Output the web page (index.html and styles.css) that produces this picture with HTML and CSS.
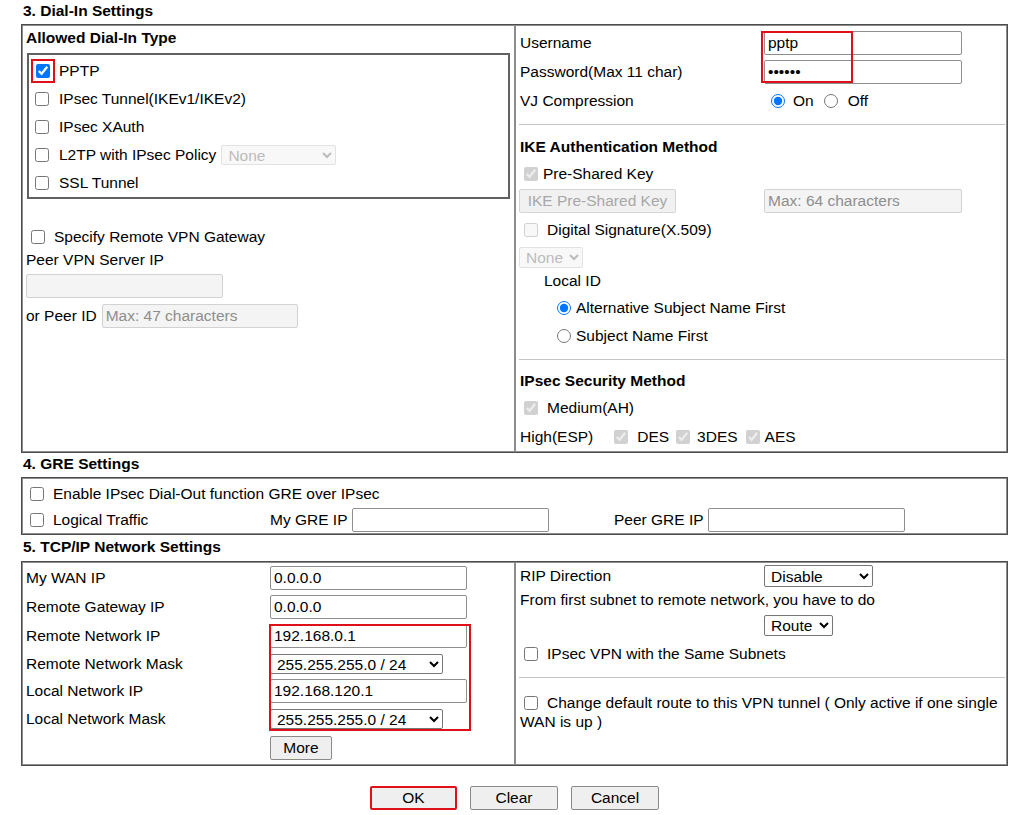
FILE: index.html
```html
<!DOCTYPE html>
<html lang="en">
<head>
<meta charset="utf-8">
<title>Dial-In Settings</title>
<link rel="stylesheet" href="styles.css">
</head>
<body>
<div class="page">
  <div class="sec-title">3. Dial-In Settings</div>
  <div class="box box3 two">
    <div class="cell cell-left">
      <div class="bold-row pl3 h24">Allowed Dial-In Type</div>
      <div class="typebox">
        <div class="trow"><span class="redcb"><input type="checkbox" class="cb" checked></span><span class="tlabel">PPTP</span></div>
        <div class="trow"><input type="checkbox" class="cb tcb"><span>IPsec Tunnel(IKEv1/IKEv2)</span></div>
        <div class="trow"><input type="checkbox" class="cb tcb"><span>IPsec XAuth</span></div>
        <div class="trow"><input type="checkbox" class="cb tcb"><span>L2TP with IPsec Policy</span><select class="sel sel-l2tp" disabled><option>None</option></select></div>
        <div class="trow"><input type="checkbox" class="cb tcb"><span>SSL Tunnel</span></div>
      </div>
      <div class="row specify"><input type="checkbox" class="cb spec-cb"><span>Specify Remote VPN Gateway</span></div>
      <div class="row pl3 h20">Peer VPN Server IP</div>
      <div class="row pl3 h32"><input type="text" class="txt dis w197" disabled></div>
      <div class="row pl3 h28"><span>or Peer ID</span><input type="text" class="txt dis w196 peerid" placeholder="Max: 47 characters" disabled></div>
    </div>
    <div class="cell cell-right">
      <div class="red-user"></div>
      <div class="frow h29 mt2"><span>Username</span><input type="text" class="txt w198" value="pptp"></div>
      <div class="frow h29"><span>Password(Max 11 char)</span><input type="password" class="txt w198" value="123456"></div>
      <div class="frow h29"><span>VJ Compression</span><span class="radios"><input type="radio" name="vj" class="rd rd-on" checked><span>On</span><input type="radio" name="vj" class="rd rd-off"><span>Off</span></span></div>
      <div class="sep"></div>
      <div class="bold-row h26">IKE Authentication Method</div>
      <div class="row h28"><input type="checkbox" class="cb rcb rcb-near" checked disabled><span>Pre-Shared Key</span></div>
      <div class="frow h26"><button class="btn btn-ike" disabled>IKE Pre-Shared Key</button><input type="text" class="txt dis w198" placeholder="Max: 64 characters" disabled></div>
      <div class="row h32"><input type="checkbox" class="cb rcb" disabled><span>Digital Signature(X.509)</span></div>
      <div class="row h22"><select class="sel sel-none" disabled><option>None</option></select></div>
      <div class="row h26 pl24">Local ID</div>
      <div class="row h28 pl37"><input type="radio" name="lid" class="rd rd-lid" checked><span>Alternative Subject Name First</span></div>
      <div class="row h28 pl37"><input type="radio" name="lid" class="rd rd-lid"><span>Subject Name First</span></div>
      <div class="sep"></div>
      <div class="bold-row h24">IPsec Security Method</div>
      <div class="row h30"><input type="checkbox" class="cb rcb" checked disabled><span>Medium(AH)</span></div>
      <div class="row h27"><span>High(ESP)</span><input type="checkbox" class="cb esp1" checked disabled><span>DES</span><input type="checkbox" class="cb esp2" checked disabled><span>3DES</span><input type="checkbox" class="cb esp3" checked disabled><span>AES</span></div>
    </div>
  </div>

  <div class="sec-title">4. GRE Settings</div>
  <div class="box box4">
    <div class="cell cell-full">
      <div class="row h26"><input type="checkbox" class="cb gcb"><span>Enable IPsec Dial-Out function GRE over IPsec</span></div>
      <div class="row h26">
        <span class="gcheck"><input type="checkbox" class="cb gcb"><span>Logical Traffic</span></span>
        <span class="glabel-my">My GRE IP</span><input type="text" class="txt w197">
        <span class="glabel-peer">Peer GRE IP</span><input type="text" class="txt w197">
      </div>
    </div>
  </div>

  <div class="sec-title sec-title-5">5. TCP/IP Network Settings</div>
  <div class="box box5 two">
    <div class="cell cell-left">
      <div class="red-net"></div>
      <div class="lrow h29"><span>My WAN IP</span><input type="text" class="txt w197" value="0.0.0.0"></div>
      <div class="lrow h29"><span>Remote Gateway IP</span><input type="text" class="txt w197" value="0.0.0.0"></div>
      <div class="lrow h29"><span>Remote Network IP</span><input type="text" class="txt w197" value="192.168.0.1"></div>
      <div class="lrow h27"><span>Remote Network Mask</span><select class="sel sel-mask"><option>255.255.255.0 / 24</option></select></div>
      <div class="lrow h28"><span>Local Network IP</span><input type="text" class="txt w197" value="192.168.120.1"></div>
      <div class="lrow h28"><span>Local Network Mask</span><select class="sel sel-mask"><option>255.255.255.0 / 24</option></select></div>
      <div class="lrow h29"><span></span><button class="btn btn-more">More</button></div>
    </div>
    <div class="cell cell-right">
      <div class="frow h26"><span>RIP Direction</span><select class="sel sel-rip"><option>Disable</option></select></div>
      <div class="row h22">From first subnet to remote network, you have to do</div>
      <div class="frow h29"><span></span><select class="sel sel-route"><option>Route</option></select></div>
      <div class="row h28"><input type="checkbox" class="cb rcb"><span>IPsec VPN with the Same Subnets</span></div>
      <div class="sep"></div>
      <div class="cdr"><input type="checkbox" class="cb rcb cdr-cb">Change default route to this VPN tunnel ( Only active if one single WAN is up )</div>
    </div>
  </div>

  <div class="actions">
    <button class="btn btn-ok">OK</button>
    <button class="btn btn-act">Clear</button>
    <button class="btn btn-act">Cancel</button>
  </div>
</div>
</body>
</html>
```

FILE: styles.css
```css
* { box-sizing: border-box; }

body {
  margin: 0;
  font-family: "Liberation Sans", Arial, sans-serif;
  font-size: 15.5px;
  color: #000;
  background: #fff;
}

.page { width: 1024px; }

.sec-title {
  margin-left: 23px;
  height: 22px;
  line-height: 22px;
  margin-bottom: 2px;
  font-weight: bold;
}
.sec-title-5 { height: 24px; line-height: 24px; }

.box {
  margin-left: 21px;
  width: 987px;
  border: 1px solid #4d4d4d;
}
.two {
  display: grid;
  grid-template-columns: 493px 492px;
}
.box3 { height: 429px; }
.box4 { height: 58px; }
.box5 { height: 205px; }

.cell {
  position: relative;
  border: 1px solid #8c8c8c;
}
.cell-right { padding-left: 4px; }
.cell-full { padding-top: 2px; }
.box5 .cell-left { padding-left: 3px; }

.row {
  display: flex;
  align-items: center;
}
.bold-row {
  display: flex;
  align-items: center;
  font-weight: bold;
}
.frow {
  display: grid;
  grid-template-columns: 244px 1fr;
  align-items: center;
}
.lrow {
  display: grid;
  grid-template-columns: 244px 1fr;
  align-items: center;
}

.h20 { height: 20px; }
.h22 { height: 22px; }
.h24 { height: 24px; }
.h26 { height: 26px; }
.h27 { height: 27px; }
.h28 { height: 28px; }
.h29 { height: 29px; }
.h30 { height: 30px; }
.h32 { height: 32px; }
.mt2 { margin-top: 2px; }
.pl3 { padding-left: 3px; }
.pl24 { padding-left: 24px; }
.pl37 { padding-left: 37px; }

/* checkboxes and radios */
.cb {
  width: 14px;
  height: 14px;
  margin: 0;
  flex: none;
}
.rd {
  width: 14px;
  height: 14px;
  margin: 0;
  flex: none;
}

/* Allowed dial-in type box */
.typebox {
  margin: 3px 0 0 4px;
  width: 483px;
  height: 146px;
  border: 2px solid #616161;
  padding-top: 2px;
}
.trow {
  display: flex;
  align-items: center;
  height: 28px;
}
.tcb { margin: 0 10px 0 6px; }
.redcb {
  display: inline-flex;
  border: 2px solid #e0101a;
  padding: 3px;
  margin: 0 4px 0 2px;
}
.sel-l2tp {
  margin-left: 5px;
  width: 115px;
  height: 20px;
}

.specify {
  margin-top: 25px;
  height: 26px;
}
.spec-cb { margin: 0 9px 0 8px; }
.peerid { margin-left: 5px; }

/* right column items */
.rcb { margin: 0 9px 0 4px; }
.rcb-near { margin-right: 5px; }
.radios {
  display: flex;
  align-items: center;
}
.rd-on { margin: 0 8px 0 7px; }
.rd-off { margin: 0 10px 0 10px; }
.rd-lid { margin-right: 5px; }

.esp1 { margin: 0 9px 0 21px; }
.esp2 { margin: 0 7px 0 7px; }
.esp3 { margin: 0 5px 0 8px; }

.sep {
  height: 1px;
  background: #c4c4c4;
  margin: 9px 1px 9px -1px;
}

.cdr {
  margin-top: 15px;
  line-height: 19px;
}
.cdr-cb {
  vertical-align: -2px;
  margin-right: 9px;
}

/* GRE */
.gcb { margin: 0 9px 0 7px; }
.gcheck {
  width: 247px;
  display: flex;
  align-items: center;
}
.glabel-my { width: 82px; }
.glabel-peer {
  width: 94px;
  margin-left: 65px;
}

/* form controls */
.txt {
  height: 24px;
  border: 1px solid #8f8f8f;
  border-radius: 2px;
  padding: 0 3px;
  font-family: "Liberation Sans", Arial, sans-serif;
  font-size: 15.5px;
  color: #000;
  background: #fff;
}
.txt::placeholder { color: #8e8e8e; }
.dis {
  background: #f4f4f4;
  border-color: #d2d2d2;
}
.w196 { width: 196px; }
.w197 { width: 197px; }
.w198 { width: 198px; }

.sel {
  font-family: "Liberation Sans", Arial, sans-serif;
  font-size: 15.5px;
  color: #000;
  padding: 0 0 0 2px;
  border: 1px solid #767676;
  border-radius: 2px;
  background-color: #fff;
}
.sel:disabled {
  color: #a0a0a0;
  border-color: #d6d6d6;
  background-color: #f6f6f6;
}
.sel-none {
  width: 64px;
  height: 21px;
  margin-left: -1px;
}
.sel-mask { width: 173px; height: 20px; }
.sel-rip { width: 109px; height: 22px; }
.sel-route { width: 69px; height: 21px; }

.btn {
  height: 24px;
  padding: 0;
  font-family: "Liberation Sans", Arial, sans-serif;
  font-size: 15.5px;
  color: #000;
  background: #efefef;
  border: 1px solid #8a8a8a;
  border-radius: 2px;
}
.btn-ike {
  width: 157px;
  margin-left: -1px;
  color: #a8a8a8;
  background: #f1f1f1;
  border-color: #d4d4d4;
}
.btn-more { width: 62px; }

.actions {
  margin: 20px 0 0 21px;
  width: 987px;
  display: flex;
  justify-content: center;
  gap: 13px;
}
.btn-ok {
  width: 87px;
  border: 2px solid #e0101a;
}
.btn-act { width: 88px; }

/* highlight frames drawn over the form */
.red-user {
  position: absolute;
  left: 245px;
  top: 5px;
  width: 92px;
  height: 52px;
  border: 2px solid #e0101a;
  pointer-events: none;
}
.red-net {
  position: absolute;
  left: 246px;
  top: 61px;
  width: 202px;
  height: 107px;
  border: 2px solid #e0101a;
  pointer-events: none;
}
```
